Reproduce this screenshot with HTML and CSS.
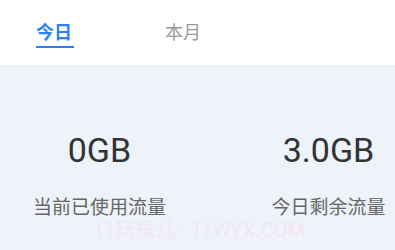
FILE: index.html
```html
<!DOCTYPE html>
<html lang="zh-CN">
<head>
    <meta charset="UTF-8">
    <meta name="viewport" content="width=device-width, initial-scale=1.0">
    <title>流量统计</title>
    <link rel="stylesheet" href="styles.css">
</head>
<body>
    <div class="tabs">
        <div class="tab active">今日</div>
        <div class="tab">本月</div>
    </div>

    <div class="panel">
        <div class="stats">
            <div class="stat">
                <div class="stat-value">0GB</div>
                <div class="stat-label">当前已使用流量</div>
            </div>
            <div class="stat stat-right">
                <div class="stat-value">3.0GB</div>
                <div class="stat-label">今日剩余流量</div>
            </div>
        </div>
        <div class="watermark">11玩意儿 · 11WYX.COM</div>
    </div>
</body>
</html>
```

FILE: styles.css
```css
html, body {
    margin: 0;
    padding: 0;
}
body {
    width: 395px;
    height: 250px;
    overflow: hidden;
    background: #eef2f9;
    font-family: Roboto, "Noto Sans CJK SC", sans-serif;
}
.tabs {
    display: flex;
    gap: 93px;
    height: 65px;
    padding-left: 36px;
    box-sizing: border-box;
    background: #fff;
}
.tab {
    font-family: "Noto Sans CJK SC", sans-serif;
    font-size: 18px;
    line-height: 18px;
    padding-top: 22px;
    color: #999;
}
.tab.active {
    color: #2f80f6;
    font-weight: 700;
}
.tab.active::after {
    content: "";
    display: block;
    height: 2px;
    margin-top: 6px;
    margin-right: -2px;
    background: #2f80f6;
}
.panel {
    position: relative;
    padding-top: 68px;
}
.stats {
    display: grid;
    grid-template-columns: 199px 196px;
}
.stat {
    text-align: center;
}
.stat-right {
    padding-left: 63px;
}
.stat-value {
    font-size: 34px;
    line-height: 34px;
    color: #333;
}
.stat-label {
    margin-top: 29px;
    font-family: "Noto Sans CJK SC", sans-serif;
    font-size: 19px;
    line-height: 19px;
    color: #666;
}
.watermark {
    position: absolute;
    left: 93px;
    top: 155px;
    font-size: 20px;
    line-height: 20px;
    color: #f3e6f2;
    white-space: nowrap;
}
```
